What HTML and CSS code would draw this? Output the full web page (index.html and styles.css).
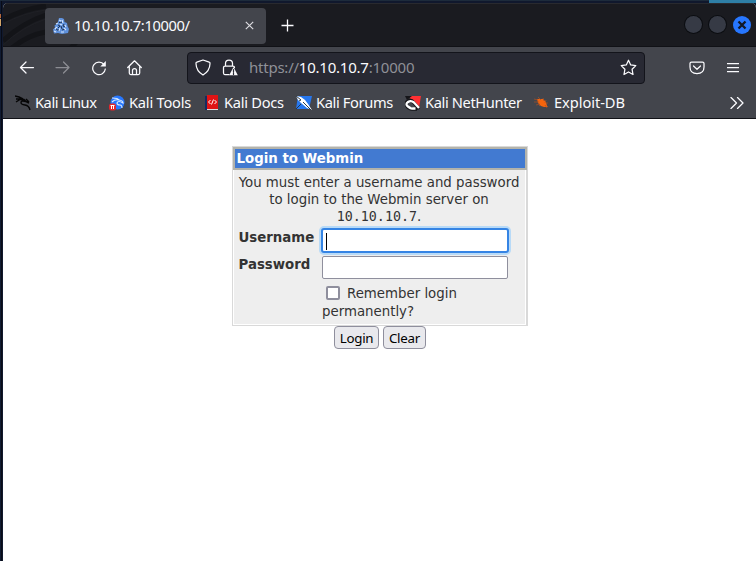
FILE: index.html
```
<!DOCTYPE html>
<html lang="en">
<head>
<meta charset="utf-8">
<title>10.10.10.7:10000/</title>
<link rel="stylesheet" href="styles.css">
</head>
<body>
<div class="desktop">
<div class="window">
  <header class="titlebar">
    <svg class="dragon" width="240" height="42" viewBox="0 0 240 42"><g fill="none" stroke="#131418" stroke-width="5"><path d="M0 16Q20 5 43 2M0 37Q19 19 43 11M9 44Q25 31 43 28M68 44l7-8"/></g><g fill="none" stroke="#1f2025"><path d="M0 20Q20 9 43 6M0 41Q19 23 43 15"/></g></svg>
    <div class="tab">
      <svg class="favicon" width="16" height="16" viewBox="0 0 16 16"><path d="M6 0h3l2 1 .5 3 2.500 1 .5 3 1.500 3-1 4-3 .5-3 .5-4-1-4 .5-1-4 2-2-.5-2 3-2z" fill="#5f91dc"/><path d="M6 4l1 1 2-1M11 6l-1 2 2 1M5 7l2 1-2 2M8 8l1 3M9 12l3-1M3 10l1 2 3 0" stroke="#1f3454" fill="none"/><path d="M6 2l2 1M9 2l1 3M3 6l2-1M7 6l2 1M12 7l1 2M4 9l-2 2M7 10l-1 3M11 10l2 2M8 14h3M1 13l2 1" stroke="#d5e7ff" stroke-width="1.100"/></svg>
      <span class="tab-title">10.10.10.7:10000/</span>
      <svg class="tab-close" width="9" height="9" viewBox="0 0 9 9"><path d="M.8.8l7.400 7.400M8.200.8L.8 8.200" stroke="#deddE2" stroke-width="1.150"/></svg>
    </div>
    <svg class="new-tab" width="13" height="13" viewBox="0 0 13 13"><path d="M6.500.5v12M.5 6.500h12" stroke="#fbfbfe" stroke-width="1.300"/></svg>
    <div class="controls"><i></i><i></i><b><svg width="10" height="10" viewBox="0 0 10 10"><path d="M1.500 1.500l7 7M8.500 1.500l-7 7" stroke="#111827" stroke-width="2.300"/></svg></b></div>
  </header>
  <nav class="navbar">
    <div class="nav-buttons">
      <svg width="16" height="16" viewBox="0 0 16 16"><path d="M14.500 7.500H1.700M7 2L1.500 7.500 7 13"/></svg>
      <svg class="disabled" width="16" height="16" viewBox="0 0 16 16"><path d="M1 7.500h13M8.500 2L14 7.500 8.500 13"/></svg>
      <svg width="16" height="16" viewBox="0 0 16 16"><path d="M13 4.500A6.300 6.300 0 1 0 14.300 9"/><path d="M14.800 1v5.500H9.300z" fill="#fbfbfe" stroke="none"/></svg>
      <svg width="16" height="16" viewBox="0 0 16 16"><path d="M.7 7.500l6.800-6.700 6.800 6.700M2.300 6.500V13q0 1.500 1.500 1.500h7.400q1.500 0 1.500-1.500V6.500M5.500 14.500v-4q0-2 2-2t2 2v4"/></svg>
    </div>
    <div class="urlbar">
      <svg width="16" height="17" viewBox="0 0 16 17"><path d="M8 1l6.200 2.200q1 .3.800 1.500-.3 7.400-7 11.300Q1.300 12.100 1 4.700.8 3.500 1.800 3.200z"/></svg>
      <svg class="lock" width="16" height="17" viewBox="0 0 16 17"><path d="M3.500 7V4.500Q3.500 1 7 1t3.500 3.500V7M7 15.500H2.800Q1.500 15.500 1.500 14V8.500Q1.500 7 3 7h8q1.500 0 1.500 1.500"/><path d="M11.500 8l4.300 8.200H7.200z" fill="#fbfbfe" stroke="none"/><path d="M11.500 10.500v2.800M11.500 14.200v1.200" stroke="#282933"/></svg>
      <span class="url">https://<strong>10.10.10.7</strong>:10000</span>
      <svg class="star" width="17" height="17" viewBox="0 0 17 17"><path d="M8.500 1.200l2.200 4.700 5.100.7-3.700 3.700.9 5.200-4.500-2.500L4 15.500l.9-5.200-3.700-3.700 5.100-.7z"/></svg>
    </div>
    <svg class="pocket" width="16" height="16" viewBox="0 0 16 16"><path d="M2.500 2h11Q15 2 15 3.500V7q0 6.500-7 6.500T1 7V3.500Q1 2 2.500 2zM4.500 6L8 9.300 11.500 6"/></svg>
    <svg class="menu" width="12" height="12" viewBox="0 0 12 12"><path d="M.5 1.500h11M.5 5.500h11M.5 9.500h11"/></svg>
  </nav>
  <div class="bookmarks">
    <a class="bm linux"><svg width="16" height="16" viewBox="0 0 16 16"><path d="M0 1l4 1 4 2M1 4l4 0 3 1M1 7l4-2.500h4l2 2M14 8l-3-1.500q-5-1.500-5 1 0 2 4 2.500 4 .5 5 5M11 4l3 3" fill="none" stroke="#050506" stroke-width="1.400"/></svg><span>Kali Linux</span></a>
    <a class="bm tools"><svg width="16" height="16" viewBox="0 0 16 16"><circle cx="8.500" cy="7.500" r="7" fill="#2777ff"/><path d="M3 3l5 .5 3 2M3 7q3-3 7-2 4 .5 4 3-5-3-6 0 0 2 3 2 2 0 2 3" fill="none" stroke="#d7eaff" stroke-width="1.100"/><rect y="8.500" width="7" height="7" rx="2.500" fill="#e3262d"/><path d="M1.500 10.500h4M2.500 10.500v3.500M4.500 10.500v3.500" stroke="#fff"/></svg><span>Kali Tools</span></a>
    <a class="bm docs"><svg width="14" height="16" viewBox="0 0 14 16"><path d="M0 1h3v14H0z" fill="#162b62"/><path d="M2 0h11v14H2z" fill="#e01414"/><path d="M2 14h11v1H2z" fill="#ddd"/><path d="M5.500 5L3.500 7l2 2M9.500 5l2 2-2 2M8.500 4.500l-2 5" fill="none" stroke="#fff"/></svg><span>Kali Docs</span></a>
    <a class="bm forums"><svg width="16" height="16" viewBox="0 0 16 16"><path d="M2 1h14l-3 13H0z" fill="#2777ee"/><path d="M0 1l5 1 4 3 3 4 4 6-5-2-6-5-3-3z" fill="#fff"/><path d="M0 1l5 4-2 1M7 7l8 8M0 14l5-5" fill="none" stroke="#263849"/></svg><span>Kali Forums</span></a>
    <a class="bm hunter"><svg width="16" height="16" viewBox="0 0 16 16"><path d="M4 1h12l-2 12-7-5z" fill="#ff3033"/><path d="M0 1l7 0-5 4z" fill="#151519"/><path d="M14 14L9 8Q6 4 3 6t-1 5 5 3h5" fill="none" stroke="#16161a" stroke-width="3.500"/><path d="M14 13L9 7.500Q6 5 3 7t0 4.500 4.500 2h3" fill="none" stroke="#fff" stroke-width="2.300"/></svg><span>Kali NetHunter</span></a>
    <a class="bm exploit"><svg width="16" height="16" viewBox="0 0 16 16"><path d="M3 4l3 0 3 0 3 3 1 4 1 1-4 0-3-1-3-3z" fill="#f4640d"/><path d="M0 7h5M2 10l4-1M4 2l3 3M9 3l1 3M12 5l-1 3M12 8l2 0M11 10l2 3M6 10l-1 1M0 4l4 1" stroke="#a95127" stroke-width=".7"/></svg><span>Exploit-DB</span></a>
    <svg class="overflow" width="14" height="12" viewBox="0 0 14 12"><path d="M1 .5L6.500 6 1 11.500M7.500.5L13 6l-5.500 5.500"/></svg>
  </div>
  <main class="page">
    <form class="login">
      <div class="panel">
        <h1>Login to Webmin</h1>
        <div class="panel-body">
          <p>You must enter a username and password<br>to login to the Webmin server on<br><code>10.10.10.7</code>.</p>
          <label class="name">Username</label><div class="field focused"><i class="caret"></i></div>
          <label class="name second">Password</label><div class="field plain"></div>
          <label class="remember"><i class="check"></i>Remember login<br>permanently?</label>
        </div>
      </div>
      <div class="actions"><button type="button" class="go">Login</button><button type="button" class="clear">Clear</button></div>
    </form>
  </main>
</div>
</div>
</body>
</html>
```
FILE: styles.css
```
* { box-sizing: border-box; }
body { margin: 0; width: 756px; height: 561px; overflow: hidden; background: #101321; font-family: "Noto Sans", sans-serif; }
svg { display: block; flex: none; }
.desktop {
  height: 561px;
  padding: 3px 0 0 3px;
  background:
    linear-gradient(#b5683c 0 4px, #202a3a 4px 5px, #d3a568 5px) 0 14px / 1px 12px no-repeat,
    linear-gradient(#2e7fa6, #2e7fa6) 709px 0 / 47px 3px no-repeat,
    linear-gradient(#1d2b3b, #1d2b3b) 0 0 / 709px 1px no-repeat,
    linear-gradient(90deg, #101b32 0 1px, #080b16 1px 2px, #10182d 2px);
}
.window { height: 558px; display: flex; flex-direction: column; overflow: hidden; border-radius: 5px 5px 0 0; background: #fff; }
.titlebar { position: relative; height: 44px; flex: none; display: flex; align-items: center; background: #1a1b20; border-top: 1px solid #292a2f; border-bottom: 1px solid #101116; overflow: hidden; }
.dragon { position: absolute; left: 0; top: 0; }
.tab { position: relative; width: 221px; height: 36px; margin-left: 42px; margin-top: 1px; border-radius: 4px; background: #43454c; display: flex; align-items: center; padding: 0 12px 0 8px; color: #fbfbfe; font-size: 14.67px; }
.tab-title { margin: -2px 0 0 5px; line-height: 20px; letter-spacing: -.36px; }
.tab-close { margin-left: auto; }
.new-tab { margin: 1px 0 0 15px; }
.controls { margin-left: auto; display: flex; gap: 7px; margin-right: 5px; }
.controls i, .controls b { width: 17px; height: 17px; border-radius: 50%; background: #363a45; box-shadow: 0 0 0 1px #0b0d11; }
.controls b { width: 18px; height: 18px; display: grid; place-items: center; background: #2777ff; box-shadow: none; }
.navbar { height: 41px; flex: none; display: flex; align-items: center; background: #43454c; padding-left: 16px; }
.navbar > svg, .nav-buttons svg, .urlbar svg, .overflow { fill: none; stroke: #fbfbfe; stroke-width: 1.25; stroke-linecap: round; stroke-linejoin: round; }
.nav-buttons { display: flex; gap: 20px; width: 168px; }
.nav-buttons .disabled { stroke: #8c8d93; }
.urlbar { width: 458px; height: 32px; border: 1px solid #13141b; border-radius: 4px; background: #282933; display: flex; align-items: center; padding: 0 7px; color: #8f9097; font-size: 15px; }
.lock { margin-left: 11px; }
.url { margin: -2px 0 0 11px; line-height: 22px; letter-spacing: -.23px; }
.url strong { color: #fbfbfe; font-weight: 400; }
.star { margin-left: auto; }
.pocket { margin-left: 44px; }
.menu { margin-left: 22px; }
.bookmarks { height: 31px; flex: none; display: flex; align-items: center; background: #43454c; border-bottom: 1px solid #111217; padding: 0 12px 0 12px; color: #fbfbfe; font-size: 14.67px; }
.bm { display: flex; align-items: center; gap: 4px; white-space: nowrap; height: 22px; letter-spacing: -.3px; }
.bm span { margin-top: -2px; }
.linux { width: 94px; letter-spacing: -.45px; }
.tools { width: 96px; letter-spacing: -.22px; }
.docs { width: 91px; gap: 5px; letter-spacing: -.27px; }
.forums { width: 109px; letter-spacing: -.36px; }
.hunter { width: 129px; letter-spacing: -.38px; }
.exploit { letter-spacing: -.07px; }
.overflow { margin-left: auto; }
.page { flex: 1; padding: 27px 0 0 229px; color: #333; font-family: "DejaVu Sans", sans-serif; font-size: 13.33px; }
.login { width: 296px; }
.panel { height: 180px; border: 1px solid #d9d9d9; border-right-width: 2px; background: #eee; box-shadow: inset 0 0 0 1px #fff; }
.panel h1 { height: 23px; margin: 0 -1px 0 0; padding: 1px 1.5px; border: 2px solid #b3b3ab; background: #427ad1; color: #fff; font-size: 13.33px; line-height: 17px; }
.panel-body { padding: 4px 4px 4px 5.5px; display: grid; grid-template-columns: 83.5px 188px; align-items: start; }
.panel-body p { grid-column: 1 / 3; width: 281px; margin: 0 0 3px; text-align: center; line-height: 17px; white-space: nowrap; }
code { font-family: "DejaVu Sans Mono", monospace; }
.name { padding-top: 1px; font-weight: 700; line-height: 18px; }
.second { padding-top: 3px; }
.field { background: #fff; }
.focused { width: 188px; height: 25px; border: 2px solid #3584e4; border-radius: 3px; box-shadow: 0 0 0 2px #b8daf7; padding: 3px; margin-left: -1px; }
.caret { display: block; width: 1px; height: 17px; background: #000; }
.plain { width: 186px; height: 23px; margin-top: 3px; border: 1px solid #8f8f9d; border-radius: 2px; }
.remember { grid-column: 2; margin-top: 6px; line-height: 18px; }
.check { display: inline-block; width: 14px; height: 14px; margin: 0 7px 0 4px; border: 2px solid #8f8f9d; border-radius: 2px; background: #fff; vertical-align: -2px; }
.actions { display: flex; justify-content: center; gap: 4px; }
.actions button { height: 23px; padding: 0; border: 1px solid #8f8f9d; border-radius: 4px; background: #e9e9ed; color: #000; font: 13.33px "Noto Sans", sans-serif; letter-spacing: -.25px; }
.go { width: 45px; }
.clear { width: 43px; }
```
